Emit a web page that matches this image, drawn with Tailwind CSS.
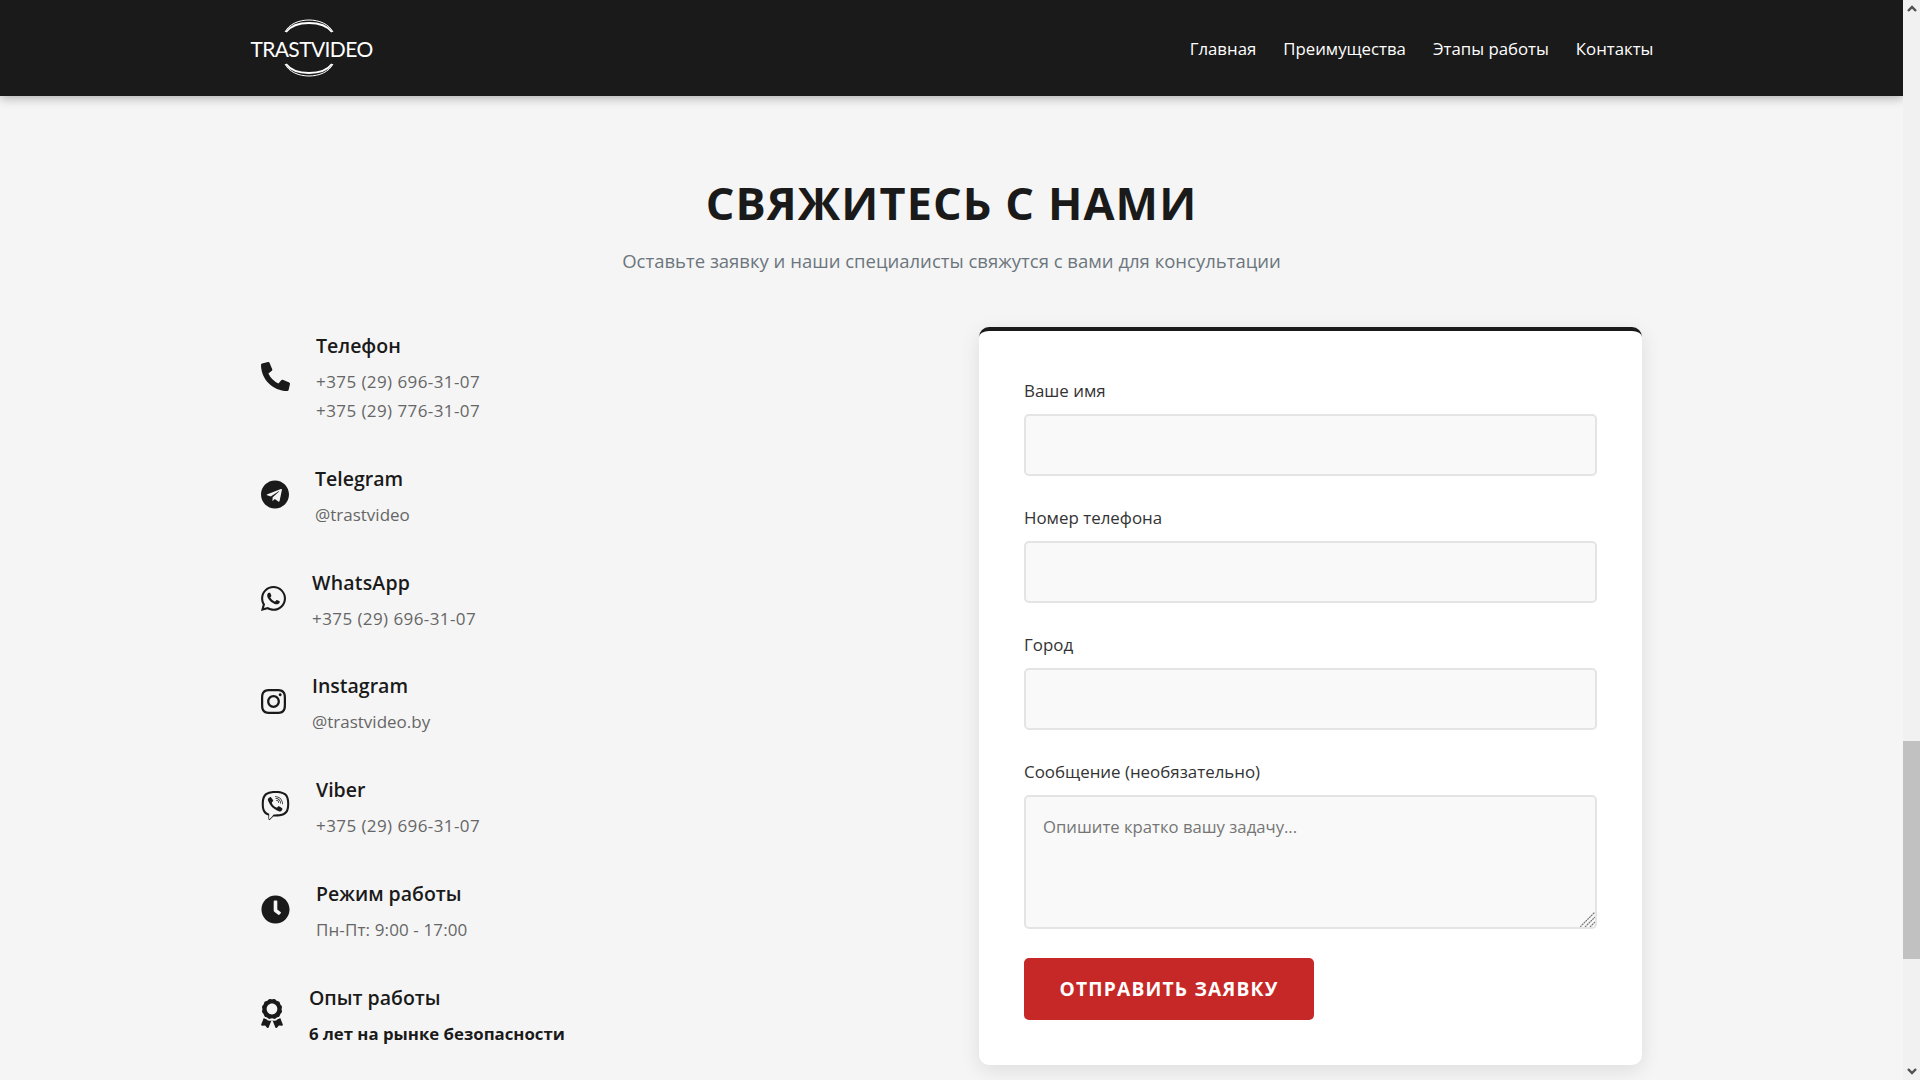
<!DOCTYPE html>
<html lang="ru">
<head>
    <meta charset="UTF-8">
    <meta name="viewport" content="width=device-width, initial-scale=1.0">
    <title>TrastVideo</title>
    <script src="https://cdn.jsdelivr.net/npm/@tailwindcss/browser@4"></script>
</head>
<body class="h-screen overflow-hidden flex bg-[#f5f5f5] text-[#1a1a1a] font-['Open_Sans',sans-serif]">

    <div class="flex-1 min-w-0 flex flex-col">
        <!-- header -->
        <header class="h-[96px] shrink-0 bg-[#1a1a1a] shadow-[0_2px_10px_rgba(0,0,0,0.3)] relative z-10">
            <div class="w-[1404px] mx-auto h-full flex items-center justify-between">
                <a href="#" class="relative w-[124px] h-[62px] flex items-center justify-center text-white">
                    <svg class="absolute left-[33px] top-0" width="52" height="62" viewBox="0 0 52 62" fill="none" stroke="#fff">
                        <path d="M2 15 C10 -1 42 -1 50 15" stroke-width="1"/>
                        <path d="M3 15 C12 3 40 3 49 15" stroke-width="2"/>
                        <path d="M2 47 C10 63 42 63 50 47" stroke-width="1"/>
                        <path d="M3 47 C12 59 40 59 49 47" stroke-width="2"/>
                    </svg>
                    <span class="font-['Lato',sans-serif] text-[21px] tracking-[-0.6px] leading-none">TRASTVIDEO</span>
                </a>
                <nav class="flex gap-[27px] pt-[1px] text-[16.8px] text-white">
                    <a href="#">Главная</a>
                    <a href="#">Преимущества</a>
                    <a href="#">Этапы работы</a>
                    <a href="#">Контакты</a>
                </nav>
            </div>
        </header>

        <main class="flex-1 min-h-0 overflow-hidden">
            <div class="text-center pt-[76px]">
                <h2 class="text-[45px] leading-[62px] font-bold tracking-[1.1px]">СВЯЖИТЕСЬ С НАМИ</h2>
                <p class="mt-[12px] text-[18.5px] leading-[30px] text-[#6c757d]">Оставьте заявку и наши специалисты свяжутся с вами для консультации</p>
            </div>

            <div class="w-[1381px] mx-auto mt-[51px] flex justify-between items-start">
                <!-- contacts -->
                <div class="w-[664px] pt-[2px] flex flex-col gap-[36.8px]">
                    <div class="flex items-center gap-[26px]">
                        <svg class="w-[29px] h-[29px] shrink-0 mb-[2px]" viewBox="0 0 512 512" fill="#1a1a1a"><path d="M497.39 361.8l-112-48a24 24 0 0 0-28 6.9l-49.6 60.6A370.66 370.66 0 0 1 130.6 204.11l60.6-49.6a23.94 23.94 0 0 0 6.9-28l-48-112A24.16 24.16 0 0 0 122.6.61l-104 24A24 24 0 0 0 0 48c0 256.5 207.9 464 464 464a24 24 0 0 0 23.4-18.6l24-104a24.29 24.29 0 0 0-14.01-27.6z"/></svg>
                        <div>
                            <h3 class="text-[19.5px] leading-[33px] font-semibold mb-[5px]">Телефон</h3>
                            <p class="text-[17px] leading-[29px] tracking-[0.42px] text-[#666]">+375 (29) 696-31-07</p>
                            <p class="text-[17px] leading-[29px] tracking-[0.42px] text-[#666]">+375 (29) 776-31-07</p>
                        </div>
                    </div>
                    <div class="flex items-center gap-[26px]">
                        <svg class="w-[28px] h-[29px] shrink-0 mb-[2px]" viewBox="0 0 496 512" fill="#1a1a1a"><path d="M248 8C111 8 0 119 0 256s111 248 248 248 248-111 248-248S385 8 248 8zm121.8 169.9l-40.7 191.8c-3 13.6-11.1 16.9-22.4 10.5l-62-45.7-29.9 28.8c-3.3 3.3-6.1 6.1-12.5 6.1l4.4-63.1 114.9-103.8c5-4.4-1.1-6.9-7.7-2.5l-142 89.4-61.2-19.1c-13.3-4.2-13.6-13.3 2.8-19.7l239.1-92.2c11.1-4 20.8 2.7 17.2 19.5z"/></svg>
                        <div>
                            <h3 class="text-[19.5px] leading-[33px] font-semibold mb-[5px]">Telegram</h3>
                            <p class="text-[17px] leading-[29px] text-[#666]">@trastvideo</p>
                        </div>
                    </div>
                    <div class="flex items-center gap-[26px]">
                        <svg class="w-[25px] h-[29px] shrink-0 mb-[2px]" viewBox="0 0 448 512" fill="#1a1a1a"><path d="M380.9 97.1C339 55.1 283.2 32 223.9 32c-122.4 0-222 99.6-222 222 0 39.1 10.2 77.3 29.6 111L0 480l117.7-30.9c32.4 17.7 68.9 27 106.1 27h.1c122.3 0 224.1-99.6 224.1-222 0-59.3-25.2-115-67.1-157zm-157 341.6c-33.2 0-65.7-8.9-94-25.7l-6.7-4-69.8 18.3L72 359.2l-4.4-7c-18.5-29.4-28.2-63.3-28.2-98.2 0-101.7 82.8-184.5 184.6-184.5 49.3 0 95.6 19.2 130.4 54.1 34.8 34.9 56.2 81.2 56.1 130.5 0 101.8-84.9 184.6-186.6 184.6zm101.2-138.2c-5.5-2.8-32.8-16.2-37.9-18-5.1-1.9-8.8-2.8-12.5 2.8-3.7 5.6-14.3 18-17.6 21.8-3.2 3.7-6.5 4.2-12 1.4-32.6-16.3-54-29.1-75.5-66-5.7-9.8 5.7-9.1 16.3-30.3 1.8-3.7.9-6.9-.5-9.7-1.4-2.8-12.5-30.1-17.1-41.2-4.5-10.8-9.1-9.3-12.5-9.5-3.2-.2-6.9-.2-10.6-.2-3.7 0-9.7 1.4-14.8 6.9-5.1 5.6-19.4 19-19.4 46.3 0 27.3 19.9 53.7 22.6 57.4 2.8 3.7 39.1 59.7 94.8 83.8 35.2 15.2 49 16.5 66.6 13.9 10.7-1.6 32.8-13.4 37.4-26.4 4.6-13 4.6-24.1 3.2-26.4-1.3-2.5-5-3.9-10.5-6.6z"/></svg>
                        <div>
                            <h3 class="text-[19.5px] leading-[33px] font-semibold mb-[5px] tracking-[0.2px]">WhatsApp</h3>
                            <p class="text-[17px] leading-[29px] tracking-[0.42px] text-[#666]">+375 (29) 696-31-07</p>
                        </div>
                    </div>
                    <div class="flex items-center gap-[26px]">
                        <svg class="w-[25px] h-[29px] shrink-0 mb-[2px]" viewBox="0 0 448 512" fill="#1a1a1a"><path d="M224.1 141c-63.6 0-114.9 51.3-114.9 114.9s51.3 114.9 114.9 114.9S339 319.5 339 255.9 287.7 141 224.1 141zm0 189.6c-41.1 0-74.7-33.5-74.7-74.7s33.5-74.7 74.7-74.7 74.7 33.5 74.7 74.7-33.6 74.7-74.7 74.7zm146.4-194.3c0 14.9-12 26.8-26.8 26.8-14.9 0-26.8-12-26.8-26.8s12-26.8 26.8-26.8 26.8 12 26.8 26.8zm76.1 27.2c-1.7-35.9-9.9-67.7-36.2-93.9-26.2-26.2-58-34.4-93.9-36.2-37-2.1-147.9-2.1-184.9 0-35.8 1.7-67.6 9.9-93.9 36.1s-34.4 58-36.2 93.9c-2.1 37-2.1 147.9 0 184.9 1.7 35.9 9.9 67.7 36.2 93.9s58 34.4 93.9 36.2c37 2.1 147.9 2.1 184.9 0 35.9-1.7 67.7-9.9 93.9-36.2 26.2-26.2 34.4-58 36.2-93.9 2.1-37 2.1-147.8 0-184.8zM398.8 388c-7.8 19.6-22.9 34.7-42.6 42.6-29.5 11.7-99.5 9-132.1 9s-102.7 2.6-132.1-9c-19.6-7.8-34.7-22.9-42.6-42.6-11.7-29.5-9-99.5-9-132.1s-2.6-102.7 9-132.1c7.8-19.6 22.9-34.7 42.6-42.6 29.5-11.7 99.5-9 132.1-9s102.7-2.6 132.1 9c19.6 7.8 34.7 22.9 42.6 42.6 11.7 29.5 9 99.5 9 132.1s2.7 102.7-9 132.1z"/></svg>
                        <div>
                            <h3 class="text-[19.5px] leading-[33px] font-semibold mb-[5px]">Instagram</h3>
                            <p class="text-[17px] leading-[29px] text-[#666]">@trastvideo.by</p>
                        </div>
                    </div>
                    <div class="flex items-center gap-[26px]">
                        <svg class="w-[29px] h-[29px] shrink-0 mb-[2px]" viewBox="0 0 512 512" fill="#1a1a1a"><path d="M444 49.9C431.3 38.2 379.9.9 265.3.4c0 0-135.1-8.1-200.9 52.3C27.8 89.3 14.9 143 13.5 209.5c-1.4 66.5-3.1 191.1 117 224.9h.1l-.1 51.6s-.8 20.9 13 25.1c16.6 5.2 26.4-10.7 42.3-27.8 8.7-9.4 20.7-23.2 29.8-33.7 82.2 6.9 145.3-8.9 152.5-11.2 16.6-5.4 110.5-17.4 125.7-142 15.8-128.6-7.6-209.8-49.8-246.5zM457.9 287c-12.9 104-89 110.6-103 115.1-6 1.9-61.5 15.7-131.2 11.2 0 0-52 62.7-68.2 79-5.3 5.3-11.1 4.8-11-5.7 0-6.9.4-85.7.4-85.7-.1 0-.1 0 0 0-101.8-28.2-95.8-134.3-94.7-189.8 1.1-55.5 11.6-101 42.6-131.6 55.7-50.5 170.4-43 170.4-43 96.9.4 143.3 29.6 154.1 39.4 35.7 30.6 53.9 103.8 40.6 211.1zm-139-80.8c.4 8.6-12.5 9.2-12.9.6-1.1-22-11.4-32.7-32.6-33.9-8.6-.5-7.8-13.4.7-12.9 27.9 1.5 43.4 17.5 44.8 46.2zm20.3 11.3c1-42.4-25.5-75.6-75.8-79.3-8.5-.6-7.6-13.5.9-12.9 58 4.2 88.9 44.1 87.8 92.5-.1 8.6-13.1 8.2-12.9-.3zm47 13.4c.1 8.6-12.9 8.7-12.9.1-.6-81.5-54.9-125.9-120.8-126.4-8.5-.1-8.5-12.9 0-12.9 73.7.5 133 51.4 133.7 139.2zM374.9 329v.2c-10.8 19-31 40-51.8 33.3l-.2-.3c-21.1-5.9-70.8-31.5-102.2-56.5-16.2-12.8-31-27.9-42.4-42.4-10.3-12.9-20.7-28.2-30.8-46.6-21.3-38.5-26-55.7-26-55.7-6.7-20.8 14.2-41 33.3-51.8h.2c9.2-4.8 18-3.2 23.9 3.9 0 0 12.4 14.8 17.7 22.1 5 6.8 11.7 17.7 15.2 23.8 6.1 10.9 2.3 22-3.7 26.6l-12 9.6c-6.1 4.9-5.3 14-5.3 14s17.8 67.3 84.3 84.3c0 0 9.1.8 14-5.3l9.6-12c4.6-6 15.7-9.8 26.6-3.7 14.7 8.3 33.4 21.2 45.8 32.9 7 5.7 8.6 14.4 3.8 23.6z"/></svg>
                        <div>
                            <h3 class="text-[19.5px] leading-[33px] font-semibold mb-[5px]">Viber</h3>
                            <p class="text-[17px] leading-[29px] tracking-[0.42px] text-[#666]">+375 (29) 696-31-07</p>
                        </div>
                    </div>
                    <div class="flex items-center gap-[26px]">
                        <svg class="w-[29px] h-[29px] shrink-0 mb-[2px]" viewBox="0 0 512 512" fill="#1a1a1a"><path d="M256,8C119,8,8,119,8,256S119,504,256,504,504,393,504,256,393,8,256,8Zm92.49,313h0l-20,25a16,16,0,0,1-22.49,2.5h0l-67-49.72a40,40,0,0,1-15-31.23V112a16,16,0,0,1,16-16h32a16,16,0,0,1,16,16V256l58,42.5A16,16,0,0,1,348.49,321Z"/></svg>
                        <div>
                            <h3 class="text-[19.5px] leading-[33px] font-semibold mb-[5px]">Режим работы</h3>
                            <p class="text-[17px] leading-[29px] tracking-[0.12px] text-[#666]">Пн-Пт: 9:00 - 17:00</p>
                        </div>
                    </div>
                    <div class="flex items-center gap-[26px]">
                        <svg class="w-[22px] h-[29px] shrink-0 mb-[2px]" viewBox="0 0 384 512" fill="#1a1a1a"><path d="M97.12 362.63c-8.69-8.69-4.16-6.24-25.12-11.85-9.51-2.55-17.87-7.45-25.43-13.32L1.2 448.7c-4.39 10.77 3.81 22.47 15.43 22.03l52.69-2.01L105.56 507c8 8.44 22.04 5.81 26.43-4.96l52.05-127.62c-10.84 6.04-22.87 9.58-35.31 9.58-19.5 0-37.82-7.59-51.61-21.37zM382.8 448.7l-45.37-111.24c-7.56 5.88-15.92 10.77-25.43 13.32-21.07 5.64-16.45 3.18-25.12 11.85-13.79 13.78-32.12 21.37-51.62 21.37-12.44 0-24.47-3.55-35.31-9.58L252 502.04c4.39 10.77 18.44 13.4 26.43 4.96l36.25-38.28 52.69 2.01c11.62.44 19.82-11.27 15.43-22.03zM263 340c15.28-15.55 17.03-14.21 38.79-20.14 13.89-3.79 24.75-14.84 28.47-28.98 7.48-28.4 5.54-24.97 25.95-45.75 10.17-10.35 14.14-25.44 10.42-39.58-7.47-28.38-7.48-24.42 0-52.83 3.72-14.14-.25-29.23-10.42-39.58-20.41-20.78-18.47-17.36-25.95-45.75-3.72-14.14-14.58-25.19-28.47-28.98-27.88-7.61-24.52-5.62-44.95-26.41-10.17-10.35-25-14.4-38.89-10.61-27.87 7.6-23.98 7.61-51.9 0-13.89-3.79-28.72.25-38.89 10.61-20.41 20.78-17.05 18.8-44.94 26.41-13.89 3.79-24.75 14.84-28.47 28.98-7.47 28.39-5.54 24.97-25.95 45.75-10.17 10.35-14.15 25.44-10.42 39.58 7.47 28.36 7.48 24.4 0 52.82-3.72 14.14.25 29.23 10.42 39.59 20.41 20.78 18.47 17.35 25.95 45.75 3.72 14.14 14.58 25.19 28.47 28.98C104.6 325.96 106.27 325 121 340c13.23 13.47 33.84 15.88 49.74 5.82a39.676 39.676 0 0 1 42.53 0c15.89 10.06 36.5 7.65 49.73-5.82zM97.66 175.96c0-53.03 42.24-96.02 94.34-96.02s94.34 42.99 94.34 96.02-42.24 96.02-94.34 96.02-94.34-42.99-94.34-96.02z"/></svg>
                        <div>
                            <h3 class="text-[19.5px] leading-[33px] font-semibold mb-[5px]">Опыт работы</h3>
                            <p class="text-[16.8px] leading-[29px] font-bold">6 лет на рынке безопасности</p>
                        </div>
                    </div>
                </div>

                <!-- form -->
                <form class="w-[663px] h-[738px] bg-white rounded-[10px] border-t-4 border-[#1a1a1a] px-[45px] pt-[45px] shadow-[0_5px_20px_rgba(0,0,0,0.1)]">
                    <div class="mb-[27px]">
                        <label class="block text-[16.9px] leading-[30px] mb-[8px] text-[#333]">Ваше имя</label>
                        <input type="text" class="block w-full h-[62px] rounded-[5px] border-2 border-[#e4e4e4] bg-[#f9f9f9]">
                    </div>
                    <div class="mb-[27px]">
                        <label class="block text-[16.9px] leading-[30px] mb-[8px] text-[#333]">Номер телефона</label>
                        <input type="text" class="block w-full h-[62px] rounded-[5px] border-2 border-[#e4e4e4] bg-[#f9f9f9]">
                    </div>
                    <div class="mb-[27px]">
                        <label class="block text-[16.9px] leading-[30px] mb-[8px] text-[#333]">Город</label>
                        <input type="text" class="block w-full h-[62px] rounded-[5px] border-2 border-[#e4e4e4] bg-[#f9f9f9]">
                    </div>
                    <div class="mb-[29px]">
                        <label class="block text-[16.9px] leading-[30px] mb-[8px] text-[#333]">Сообщение (необязательно)</label>
                        <div class="relative">
                            <textarea placeholder="Опишите кратко вашу задачу..." class="block w-full h-[134px] resize-none rounded-[5px] border-2 border-[#e4e4e4] bg-[#f9f9f9] px-[17px] py-[16px] text-[16.7px] leading-[27px] placeholder:text-[#757575]"></textarea>
                            <!-- resize grip -->
                            <svg class="absolute right-[2px] bottom-[2px]" width="15" height="15" viewBox="0 0 15 15" fill="none" stroke="#777" stroke-width="1.2" stroke-dasharray="2 0.6">
                                <path d="M0 15L15 0M5 15L15 5M10 15L15 10"/>
                            </svg>
                        </div>
                    </div>
                    <button type="button" class="w-[290px] h-[62px] pt-[1px] rounded-[5px] bg-[#c62828] text-white text-[19.2px] font-bold tracking-[1.2px]">ОТПРАВИТЬ ЗАЯВКУ</button>
                </form>
            </div>
        </main>
    </div>

    <!-- scrollbar -->
    <div class="w-[17px] shrink-0 h-full bg-[#f1f1f1] flex flex-col relative z-20">
        <div class="h-[17px] flex items-center justify-center">
            <svg width="10" height="7" viewBox="0 0 10 7" fill="none" stroke="#505050" stroke-width="2.4"><path d="M1 6l4-4 4 4"/></svg>
        </div>
        <div class="mt-[724px] h-[218px] bg-[#c1c1c1]"></div>
        <div class="mt-auto h-[17px] flex items-center justify-center">
            <svg width="10" height="7" viewBox="0 0 10 7" fill="none" stroke="#505050" stroke-width="2.4"><path d="M1 1l4 4 4-4"/></svg>
        </div>
    </div>

</body>
</html>
